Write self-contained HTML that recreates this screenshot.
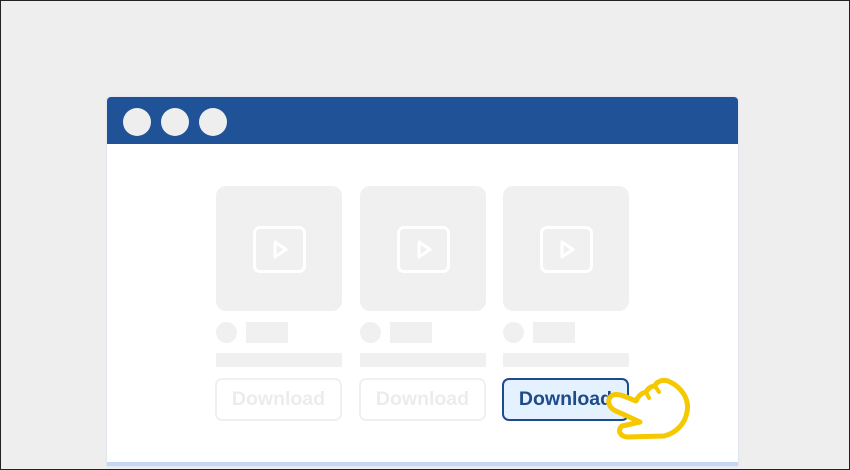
<!DOCTYPE html>
<html><head><style>
html,body{margin:0;padding:0}
body{width:850px;height:470px;background:#eeeeee;position:relative;overflow:hidden;font-family:"Liberation Sans",sans-serif;box-sizing:border-box;border:1px solid #222}
.win{position:absolute;left:106px;top:96px;width:631px;height:369px;background:#fff;border-radius:4px 4px 0 0;box-shadow:0 0 2px #c9d9f2;border-bottom:4px solid #c6d7f5;box-sizing:border-box}
.hdr{position:absolute;left:0;top:0;width:631px;height:47px;background:#1f5296;border-radius:4px 4px 0 0}
.dot{position:absolute;top:11px;width:28px;height:28px;border-radius:50%;background:#eeeeee}
.card{position:absolute;top:89px;width:126px;height:125px;border-radius:10px;background:#f0f0f0}
.play{position:absolute;left:37px;top:40px;width:47px;height:41px;border:3px solid #fff;border-radius:7px}
.circ{position:absolute;top:225px;width:21px;height:21px;border-radius:50%;background:#f0f0f0}
.rect{position:absolute;top:225px;width:42px;height:21px;background:#f0f0f0}
.bar{position:absolute;top:256px;width:126px;height:14px;background:#f0f0f0}
.btn{position:absolute;top:281px;width:127px;height:43px;border:2px solid #f0f0f0;border-radius:7px;box-sizing:border-box;color:#ececec;font-weight:bold;font-size:19.5px;text-align:center;line-height:39px}
.btn.on{border-color:#1f4a8c;background:#e4f2ff;color:#1f4a8c}
</style></head><body>
<div class="win">
<div class="hdr">
<div class="dot" style="left:16px"></div><div class="dot" style="left:54px"></div><div class="dot" style="left:92px"></div>
</div>
<div class="card" style="left:109px"><div class="play"><svg width="47" height="41" style="position:absolute;left:0;top:0"><path d="M19 13 L30 20.5 L19 28 Z" fill="none" stroke="#fff" stroke-width="3" stroke-linejoin="round"/></svg></div></div>
<div class="card" style="left:253px"><div class="play"><svg width="47" height="41" style="position:absolute;left:0;top:0"><path d="M19 13 L30 20.5 L19 28 Z" fill="none" stroke="#fff" stroke-width="3" stroke-linejoin="round"/></svg></div></div>
<div class="card" style="left:396px"><div class="play"><svg width="47" height="41" style="position:absolute;left:0;top:0"><path d="M19 13 L30 20.5 L19 28 Z" fill="none" stroke="#fff" stroke-width="3" stroke-linejoin="round"/></svg></div></div>
<div class="circ" style="left:109px"></div><div class="rect" style="left:139px"></div>
<div class="circ" style="left:253px"></div><div class="rect" style="left:283px"></div>
<div class="circ" style="left:396px"></div><div class="rect" style="left:426px"></div>
<div class="bar" style="left:109px"></div><div class="bar" style="left:253px"></div><div class="bar" style="left:396px"></div>
<div class="btn" style="left:108px">Download</div>
<div class="btn" style="left:252px">Download</div>
<div class="btn on" style="left:395px">Download</div>
</div>
<svg width="850" height="470" style="position:absolute;left:-1px;top:-1px">
<path d="M613 395 C 620 393, 628 398, 636 401 C 638 396, 642 393, 646 392 C 648 388, 652 386, 655 386 C 656 382, 662 379, 668 381 C 680 386, 690 398, 687 412 C 685 424, 676 433, 664 436 L 628 437 C 620 437, 617 430, 622 426 L 640 422 L 616 411 C 608 408, 606 398, 613 395 Z" fill="#fff" stroke="#f5c800" stroke-width="5" stroke-linejoin="round"/>
<path d="M646 392 L649 398 M655 386 L659 392" stroke="#f5c800" stroke-width="4" stroke-linecap="round"/>
</svg>
</body></html>
